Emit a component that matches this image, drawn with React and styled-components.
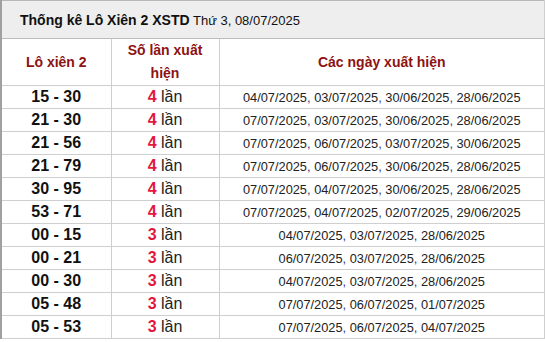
import React from 'react';
import styled, { createGlobalStyle } from 'styled-components';

const rows = [
  ['15 - 30', 4, ['04/07/2025', '03/07/2025', '30/06/2025', '28/06/2025']],
  ['21 - 30', 4, ['07/07/2025', '03/07/2025', '30/06/2025', '28/06/2025']],
  ['21 - 56', 4, ['07/07/2025', '06/07/2025', '03/07/2025', '30/06/2025']],
  ['21 - 79', 4, ['07/07/2025', '06/07/2025', '30/06/2025', '28/06/2025']],
  ['30 - 95', 4, ['07/07/2025', '04/07/2025', '30/06/2025', '28/06/2025']],
  ['53 - 71', 4, ['07/07/2025', '04/07/2025', '02/07/2025', '29/06/2025']],
  ['00 - 15', 3, ['04/07/2025', '03/07/2025', '28/06/2025']],
  ['00 - 21', 3, ['06/07/2025', '03/07/2025', '28/06/2025']],
  ['00 - 30', 3, ['04/07/2025', '03/07/2025', '28/06/2025']],
  ['05 - 48', 3, ['07/07/2025', '06/07/2025', '01/07/2025']],
  ['05 - 53', 3, ['07/07/2025', '06/07/2025', '04/07/2025']],
];

export default function App() {
  return (
    <>
      <GlobalStyle />
      <Table>
        <colgroup>
          <col style={{ width: 110 }} />
          <col style={{ width: 108 }} />
          <col />
        </colgroup>
        <thead>
          <tr>
            <Title colSpan={3}>
              <strong>Thống kê Lô Xiên 2 XSTD</strong> Thứ 3, 08/07/2025
            </Title>
          </tr>
          <tr>
            <Head>Lô xiên 2</Head>
            <Head>Số lần xuất hiện</Head>
            <Head>Các ngày xuất hiện</Head>
          </tr>
        </thead>
        <tbody>
          {rows.map(([pair, count, dates]) => (
            <tr key={pair}>
              <Pair>{pair}</Pair>
              <Count>
                <b>{count}</b> lần
              </Count>
              <Dates>
                {dates.map((d, i) => (
                  <React.Fragment key={d}>
                    {i > 0 && <Comma>, </Comma>}
                    {d}
                  </React.Fragment>
                ))}
              </Dates>
            </tr>
          ))}
        </tbody>
      </Table>
    </>
  );
}

const GlobalStyle = createGlobalStyle`
  body {
    margin: 0;
    background: #fff;
    font-family: "Liberation Sans", Arial, sans-serif;
  }
`;

const Table = styled.table`
  width: 100%;
  border-collapse: collapse;
  table-layout: fixed;
  border-left: 2px solid #a0a0a0;

  td, th {
    border: 1px solid #cfcfcf;
  }
`;

const Title = styled.th`
  height: 37px;
  padding: 0 0 0 18px;
  text-align: left;
  background: #eeeeee;
  font-size: 13px;
  font-weight: normal;
  color: #111;
  border-top-color: #b8b8b8 !important;
  border-bottom-color: #bdbdbd !important;

  strong {
    font-size: 14px;
    font-weight: bold;
  }
`;

const Head = styled.th`
  height: 45px;
  padding: 0 6px;
  font-size: 14px;
  font-weight: bold;
  line-height: 23px;
  color: #8d1212;
  text-align: center;
`;

const Pair = styled.td`
  height: 22px;
  padding: 0;
  text-align: center;
  font-size: 16px;
  font-weight: bold;
  color: #111;
`;

const Count = styled.td`
  padding: 0;
  text-align: center;
  font-size: 16px;
  color: #222;

  b {
    color: #e3173e;
  }
`;

const Dates = styled.td`
  padding: 0;
  text-align: center;
  font-size: 12.8px;
  color: #222;
  white-space: nowrap;
`;

const Comma = styled.span`
  color: #3a3a8c;
`;
